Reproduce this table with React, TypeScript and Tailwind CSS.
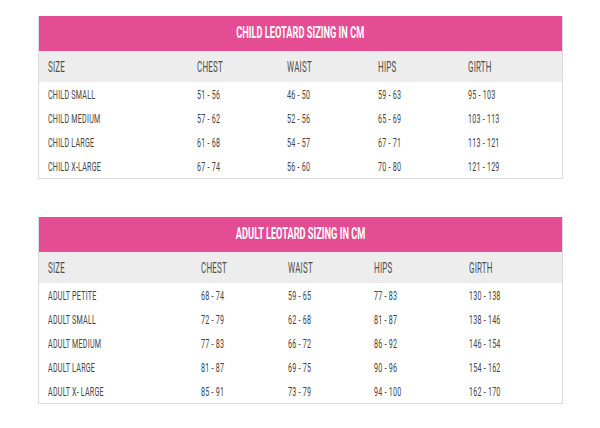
import React from "react";

type Table = {
  title: string;
  cols: string;
  rows: string[][];
};

const head = ["SIZE", "CHEST", "WAIST", "HIPS", "GIRTH"];

const tables: Table[] = [
  {
    title: "CHILD LEOTARD SIZING IN CM",
    cols: "grid-cols-[149px_90px_91px_90px_1fr]",
    rows: [
      ["CHILD SMALL", "51 - 56", "46 - 50", "59 - 63", "95 - 103"],
      ["CHILD MEDIUM", "57 - 62", "52 - 56", "65 - 69", "103 - 113"],
      ["CHILD LARGE", "61 - 68", "54 - 57", "67 - 71", "113 - 121"],
      ["CHILD X-LARGE", "67 - 74", "56 - 60", "70 - 80", "121 - 129"],
    ],
  },
  {
    title: "ADULT LEOTARD SIZING IN CM",
    cols: "grid-cols-[153px_87px_86px_95px_1fr]",
    rows: [
      ["ADULT PETITE", "68 - 74", "59 - 65", "77 - 83", "130 - 138"],
      ["ADULT SMALL", "72 - 79", "62 - 68", "81 - 87", "138 - 146"],
      ["ADULT MEDIUM", "77 - 83", "66 - 72", "86 - 92", "146 - 154"],
      ["ADULT LARGE", "81 - 87", "69 - 75", "90 - 96", "154 - 162"],
      ["ADULT X- LARGE", "85 - 91", "73 - 79", "94 - 100", "162 - 170"],
    ],
  },
];

function SizeTable({ t }: { t: Table }) {
  return (
    <div className="w-[525px] border border-[#dcdcdc] border-t-0 bg-white">
      <div className="h-[35px] bg-[#e44d93] flex items-center justify-center">
        <span className="text-white font-bold text-[16.5px] scale-x-[0.56] inline-block whitespace-nowrap">
          {t.title}
        </span>
      </div>
      <div className={`grid ${t.cols} h-[31px] pt-[2px] items-center bg-[#ededed] pl-[9px] text-[#4d4d4d] text-[14.5px] font-normal`}>
        {head.map((h) => (
          <span key={h} className="inline-block origin-left scale-x-[0.55] tracking-[0.4px] whitespace-nowrap">
            {h}
          </span>
        ))}
      </div>
      {t.rows.map((r, i) => (
        <div key={i} className={`grid ${t.cols} h-[24px] pt-[2px] items-center pl-[9px] text-[#444] text-[13px] font-normal`}>
          {r.map((c, j) => (
            <span key={j} className="inline-block origin-left scale-x-[0.55] tracking-[0.4px] whitespace-nowrap">
              {c}
            </span>
          ))}
        </div>
      ))}
    </div>
  );
}

export default function App() {
  return (
    <div
      className="w-[600px] h-[428px] bg-white pt-[16px] pl-[38px] flex flex-col gap-[38px]"
      style={{ fontFamily: 'Roboto, "Liberation Sans", sans-serif' }}
    >
      {tables.map((t) => (
        <SizeTable key={t.title} t={t} />
      ))}
    </div>
  );
}
